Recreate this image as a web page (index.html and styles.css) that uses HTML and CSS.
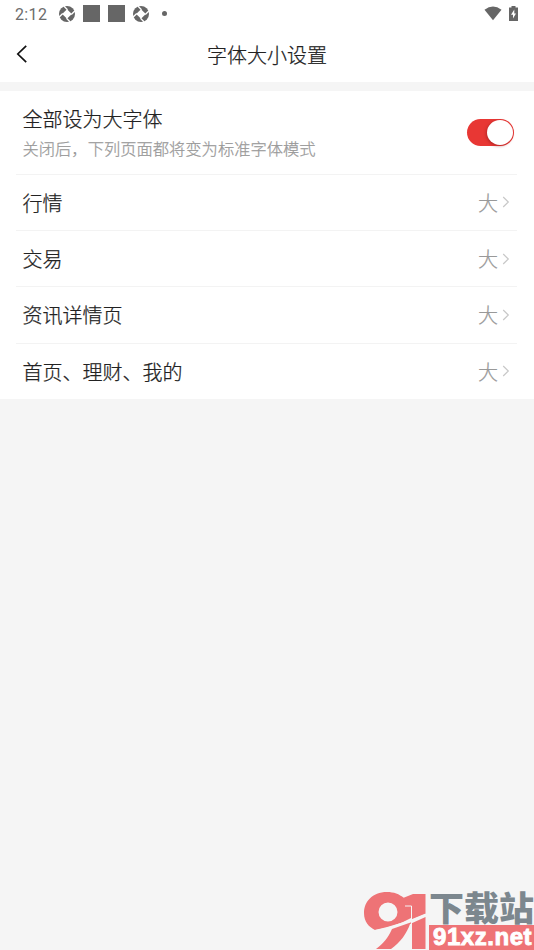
FILE: index.html
```html
<!DOCTYPE html>
<html lang="zh-CN">
<head>
<meta charset="utf-8">
<title>字体大小设置</title>
<link rel="stylesheet" href="styles.css">
</head>
<body>
<svg class="defs" width="0" height="0">
  <defs>
    <symbol id="shutter" viewBox="0 0 16 16">
      <circle cx="8" cy="8" r="8" fill="#666"/>
      <path d="M8 3.200 12.800 8 8 12.800 3.200 8Z" fill="#fff"/>
      <path d="M8.500 3.700 4.800 0M12.300 8.500 16 4.800M7.500 12.300 11.200 16M3.700 7.500 0 11.200" stroke="#fff" stroke-width="1.300"/>
    </symbol>
    <symbol id="chevron" viewBox="0 0 8 12">
      <path d="M1.2 1 6.3 6 1.2 11" fill="none" stroke="#c8c8c8" stroke-width="1.2"/>
    </symbol>
  </defs>
</svg>
<header class="status">
  <span class="time">2:12</span>
  <svg class="shutter"><use href="#shutter"/></svg>
  <i class="square"></i>
  <i class="square"></i>
  <svg class="shutter"><use href="#shutter"/></svg>
  <i class="dot"></i>
  <svg class="wifi" viewBox="0 0 18 15"><path d="M.5 3.8Q9-2.6 17.5 3.8L9 14.2Z" fill="#666"/></svg>
  <svg class="battery" viewBox="0 0 9 15"><path d="M2.5 0h4v1.5H9V15H0V1.5h2.5Z" fill="#666"/><path d="M5.3 3.4 2 8.8h2v3.8l3-5.2H5.3Z" fill="#fff"/></svg>
</header>
<nav class="nav">
  <svg class="back" viewBox="0 0 12 20"><path d="M10.2 1.8 1.8 10l8.4 8.2" fill="none" stroke="#111" stroke-width="1.7"/></svg>
  <h1>字体大小设置</h1>
</nav>
<main class="list">
  <section class="row master">
    <div>
      <h2>全部设为大字体</h2>
      <p>关闭后，下列页面都将变为标准字体模式</p>
    </div>
    <span class="switch"><i></i></span>
  </section>
  <section class="row"><h2>行情</h2><span class="value">大<svg><use href="#chevron"/></svg></span></section>
  <section class="row"><h2>交易</h2><span class="value">大<svg><use href="#chevron"/></svg></span></section>
  <section class="row"><h2>资讯详情页</h2><span class="value">大<svg><use href="#chevron"/></svg></span></section>
  <section class="row"><h2>首页、理财、我的</h2><span class="value">大<svg><use href="#chevron"/></svg></span></section>
</main>
<aside class="watermark">
  <svg class="mark" viewBox="0 0 62 59">
    <g fill="#ee7376">
      <path fill-rule="evenodd" d="M23 1C8 1 0 11 0 22c0 9 5 14 11 17 13-2 25-6 36-12V7H40C35 3 30 1 23 1ZM24 11.500a9.500 9.500 0 1 1 0 19 9.500 9.500 0 0 1 0-19Z"/>
      <path d="M39 7 49 3h12.500v20L47 29V15H39Z"/>
      <path d="M28 38 48 31v27H61.500V26L46 33c-3 9-10 19-19 25H12c7-5 12-11 16-20Z"/>
    </g>
    <path d="M9 40.500Q36 35 62 23.500" fill="none" stroke="#f5f5f5" stroke-width="2"/>
    <path d="M41 15h6.500v38" fill="none" stroke="#f5f5f5" stroke-width="1"/>
  </svg>
  <div class="brand">
    <strong>下载站</strong>
    <b>91xz.net</b>
  </div>
</aside>
</body>
</html>
```
FILE: styles.css
```css
* { box-sizing: border-box; }
body {
  margin: 0;
  height: 950px;
  overflow: hidden;
  background: #f5f5f5;
  color: #222;
  font-family: "Noto Sans CJK SC", sans-serif;
}
h1, h2, p { margin: 0; font-weight: 300; -webkit-text-stroke: .25px currentColor; }
svg { display: block; flex: none; }
.defs { position: absolute; }
.status {
  display: flex;
  align-items: center;
  height: 27px;
  padding: 0 16px 0 15px;
  background: #fff;
}
.time {
  width: 44px;
  padding-top: 1px;
  color: #6c6c6c;
  font: 400 16px/27px Roboto, sans-serif;
  letter-spacing: .35px;
}
.shutter { width: 16px; height: 16px; }
.square { width: 17px; height: 17px; margin-left: 8px; background: #666; }
.square + .shutter { margin-left: 8px; }
.dot { width: 5px; height: 5px; margin-left: 13px; border-radius: 50%; background: #666; }
.wifi { width: 18px; height: 15px; margin: 0 7px 0 auto; }
.battery { width: 9px; height: 15px; }
.nav {
  display: grid;
  grid-template-columns: 34px 1fr 34px;
  align-items: center;
  height: 55px;
  background: #fff;
}
.back { width: 12px; height: 20px; margin: -2px 0 0 16px; }
h1 { font-size: 20px; line-height: 30px; text-align: center; }
.list { margin-top: 9px; padding: 0 17px 0 16px; background: #fff; }
.row {
  display: flex;
  align-items: center;
  justify-content: space-between;
  height: 56.400px;
  padding: 1px 7px 0 6.500px;
  border-bottom: 1px solid #f3f3f3;
}
.row:last-child { height: 55.300px; border-bottom: 0; }
.master { height: 83.500px; padding-right: 3px; }
h2 { font-size: 20px; line-height: 30px; }
p { color: #999; font-size: 16.300px; line-height: 28px; }
.switch {
  display: flex;
  justify-content: flex-end;
  width: 47px;
  height: 27px;
  margin-top: -1px;
  padding: 1px;
  border-radius: 14px;
  background: #e83734;
}
.switch i { width: 26px; height: 25px; border-radius: 50%; background: #fff; box-shadow: -1px 1px 3px #8a1a1a88; }
.value {
  display: flex;
  align-items: center;
  gap: 4px;
  color: #999;
  font-size: 20px;
  font-weight: 300;
  line-height: 30px;
  -webkit-text-stroke: .25px currentColor;
}
.value svg { width: 8px; height: 12px; margin-top: -1px; }
.watermark {
  position: absolute;
  right: 0;
  bottom: 0;
  display: flex;
  width: 170px;
  height: 59px;
}
.mark { width: 62px; height: 59px; }
.brand { width: 108px; padding-left: 3px; }
.brand strong {
  display: block;
  height: 34px;
  color: #7c878e;
  font-size: 35px;
  font-weight: 900;
  line-height: 32px;
  white-space: nowrap;
  transform: scaleY(.96);
  transform-origin: 0 0;
}
.brand b {
  display: block;
  height: 25px;
  padding-left: 4px;
  background: #ee7376;
  color: #fff;
  font: bold 24px/24px "Liberation Sans", sans-serif;
  letter-spacing: .55px;
  -webkit-text-stroke: .9px #fff;
}
```
